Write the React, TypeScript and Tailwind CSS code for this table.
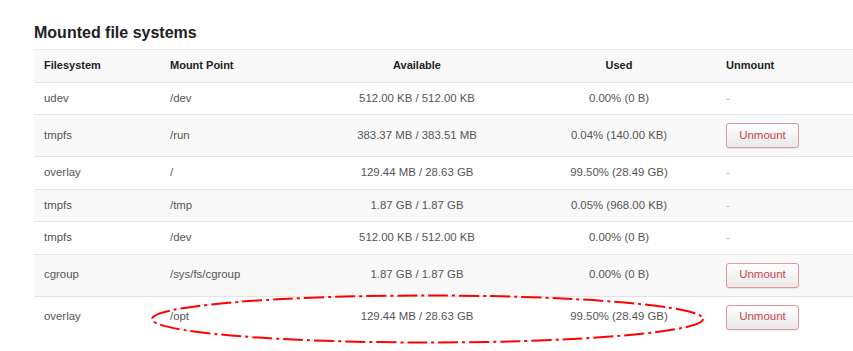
type Row = {
  fs: string;
  mount: string;
  avail: string;
  used: string;
  canUnmount: boolean;
};

const rows: Row[] = [
  { fs: 'udev', mount: '/dev', avail: '512.00 KB / 512.00 KB', used: '0.00% (0 B)', canUnmount: false },
  { fs: 'tmpfs', mount: '/run', avail: '383.37 MB / 383.51 MB', used: '0.04% (140.00 KB)', canUnmount: true },
  { fs: 'overlay', mount: '/', avail: '129.44 MB / 28.63 GB', used: '99.50% (28.49 GB)', canUnmount: false },
  { fs: 'tmpfs', mount: '/tmp', avail: '1.87 GB / 1.87 GB', used: '0.05% (968.00 KB)', canUnmount: false },
  { fs: 'tmpfs', mount: '/dev', avail: '512.00 KB / 512.00 KB', used: '0.00% (0 B)', canUnmount: false },
  { fs: 'cgroup', mount: '/sys/fs/cgroup', avail: '1.87 GB / 1.87 GB', used: '0.00% (0 B)', canUnmount: true },
  { fs: 'overlay', mount: '/opt', avail: '129.44 MB / 28.63 GB', used: '99.50% (28.49 GB)', canUnmount: true },
];

export default function App() {
  return (
    <div
      className="relative w-[853px] h-[351px] overflow-hidden bg-white"
      style={{ fontFamily: '"Liberation Sans", Arial, sans-serif' }}
    >
      <div className="pl-[34px] pt-[23px]">
        <h2 className="text-[16px] leading-[20px] font-bold text-[#222] mb-[6px]">Mounted file systems</h2>
        <table className="table-fixed w-[846px] border-collapse text-[11.4px] leading-[15.5px]">
          <colgroup>
            <col className="w-[126px]" />
            <col className="w-[152px]" />
            <col className="w-[210px]" />
            <col className="w-[194px]" />
            <col />
          </colgroup>
          <thead>
            <tr className="bg-[#f9f9f9] border-t border-[#ebebeb] text-[#222] font-bold">
              <th className="text-left font-bold px-[10px] py-2 text-[11px]">Filesystem</th>
              <th className="text-left font-bold px-[10px] py-2 text-[11px]">Mount Point</th>
              <th className="text-center font-bold px-[10px] py-2 text-[11px]">Available</th>
              <th className="text-center font-bold px-[10px] py-2 text-[11px]">Used</th>
              <th className="text-left font-bold px-[10px] py-2 text-[11px]">Unmount</th>
            </tr>
          </thead>
          <tbody className="text-[#555]">
            {rows.map((r, i) => (
              <tr key={i} className={`border-t border-[#e3e3e3] ${i % 2 === 1 ? 'bg-[#f9f9f9]' : 'bg-white'}`}>
                <td className="px-[10px] py-2">{r.fs}</td>
                <td className="px-[10px] py-2">{r.mount}</td>
                <td className="px-[10px] py-2 text-center">{r.avail}</td>
                <td className="px-[10px] py-2 text-center">{r.used}</td>
                <td className="px-[10px] py-2">
                  {r.canUnmount ? (
                    <button className="h-[25px] w-[73px] rounded-[3px] border border-[#dc9a9a] bg-gradient-to-b from-white to-[#e9e9e9] text-[#c9474a] text-[11.5px] shadow-[0_1px_1px_rgba(0,0,0,0.08)]">
                      Unmount
                    </button>
                  ) : (
                    <span className="text-[#bbb]">-</span>
                  )}
                </td>
              </tr>
            ))}
          </tbody>
        </table>
      </div>
      <svg className="absolute left-0 top-0 pointer-events-none" width="853" height="351">
        <ellipse
          cx="427.5"
          cy="319"
          rx="275.5"
          ry="23.5"
          fill="none"
          stroke="#ff0000"
          strokeWidth="2"
          strokeDasharray="20 4 3 4"
        />
      </svg>
    </div>
  );
}
